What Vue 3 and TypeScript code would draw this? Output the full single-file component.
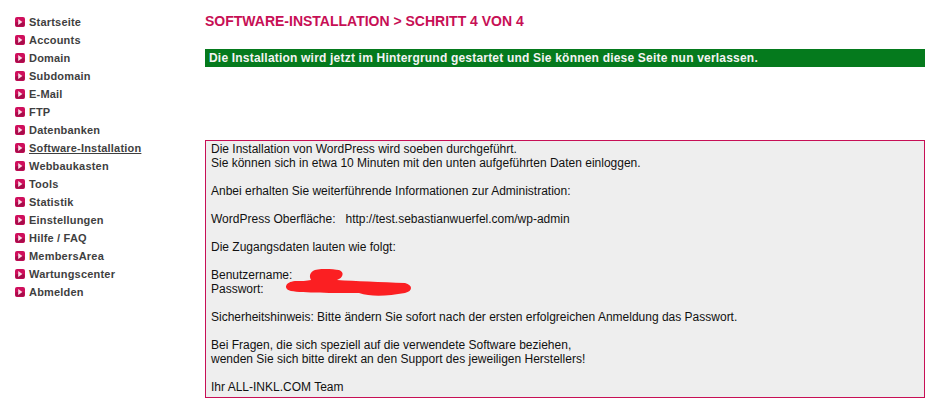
<template>
  <div class="page">
    <nav class="sidebar">
      <a
        v-for="item in menuItems"
        :key="item"
        class="menu-item"
        :class="{ active: item === activeItem }"
      >
        <svg class="bullet" width="10" height="10" viewBox="0 0 10 10">
          <rect width="10" height="10" rx="2" fill="#cf0f5c" />
          <rect x="0.5" y="5" width="9" height="4.5" rx="1.5" fill="#a80c4a" />
          <path d="M3.2 2 L7.4 5 L3.2 8 Z" fill="#fbdce8" />
        </svg>
        <span>{{ item }}</span>
      </a>
    </nav>
    <main class="content">
      <h1 class="title">SOFTWARE-INSTALLATION &gt; SCHRITT 4 VON 4</h1>
      <div class="notice">Die Installation wird jetzt im Hintergrund gestartet und Sie können diese Seite nun verlassen.</div>
      <div class="details">
        <p>Die Installation von WordPress wird soeben durchgeführt.<br />Sie können sich in etwa 10 Minuten mit den unten aufgeführten Daten einloggen.</p>
        <p>Anbei erhalten Sie weiterführende Informationen zur Administration:</p>
        <p>WordPress Oberfläche: &nbsp; http://test.sebastianwuerfel.com/wp-admin</p>
        <p>Die Zugangsdaten lauten wie folgt:</p>
        <p class="credentials">
          Benutzername:<br />Passwort:
          <svg class="scribble" width="150" height="40" viewBox="0 0 150 40">
            <path d="M30 6 C34 3 50 4 56 5 C62 7 60 13 54 15 C72 16 98 17 122 18 C130 20 130 26 122 28 C105 31 88 32 76 28 C50 28 20 28 8 26 C0 24 2 17 12 16 C18 16 24 16 28 15 C26 11 27 8 30 6 Z" fill="#fb1f22" />
          </svg>
        </p>
        <p>Sicherheitshinweis: Bitte ändern Sie sofort nach der ersten erfolgreichen Anmeldung das Passwort.</p>
        <p>Bei Fragen, die sich speziell auf die verwendete Software beziehen,<br />wenden Sie sich bitte direkt an den Support des jeweiligen Herstellers!</p>
        <p>Ihr ALL-INKL.COM Team</p>
      </div>
    </main>
  </div>
</template>

<script setup lang="ts">
const menuItems: string[] = [
  'Startseite',
  'Accounts',
  'Domain',
  'Subdomain',
  'E-Mail',
  'FTP',
  'Datenbanken',
  'Software-Installation',
  'Webbaukasten',
  'Tools',
  'Statistik',
  'Einstellungen',
  'Hilfe / FAQ',
  'MembersArea',
  'Wartungscenter',
  'Abmelden'
]

const activeItem = 'Software-Installation'
</script>

<style scoped>
.page {
  display: flex;
  width: 937px;
  height: 419px;
  overflow: hidden;
  background: #fff;
  font-family: "Liberation Sans", Arial, sans-serif;
  color: #111;
}

.sidebar {
  display: flex;
  flex-direction: column;
  width: 205px;
  flex-shrink: 0;
  padding: 13px 0 0 15px;
  box-sizing: border-box;
}

.menu-item {
  display: flex;
  align-items: center;
  gap: 4px;
  height: 18px;
  font-size: 11px;
  font-weight: 700;
  letter-spacing: 0.2px;
  color: #3f3f3f;
}

.menu-item.active span {
  text-decoration: underline;
}

.bullet {
  flex-shrink: 0;
}

.content {
  width: 720px;
  flex-shrink: 0;
}

.title {
  margin: 13px 0 0;
  font-size: 14px;
  line-height: 16px;
  font-weight: 700;
  color: #c70f55;
}

.notice {
  margin-top: 20px;
  height: 18px;
  padding-left: 4px;
  background: #057a1d;
  color: #f4f4f4;
  font-size: 12px;
  font-weight: 700;
  line-height: 18px;
  letter-spacing: 0.2px;
}

.details {
  margin-top: 73px;
  height: 258px;
  box-sizing: border-box;
  padding: 1px 5px 0;
  border: 1px solid #c70f55;
  background: #eeeeee;
  font-size: 12px;
  line-height: 14px;
  color: #111;
}

.details p {
  margin: 0 0 14px;
}

.credentials {
  position: relative;
}

.scribble {
  position: absolute;
  left: 72px;
  top: -3px;
}
</style>
<style>
body {
  background: #fff;
}
</style>
